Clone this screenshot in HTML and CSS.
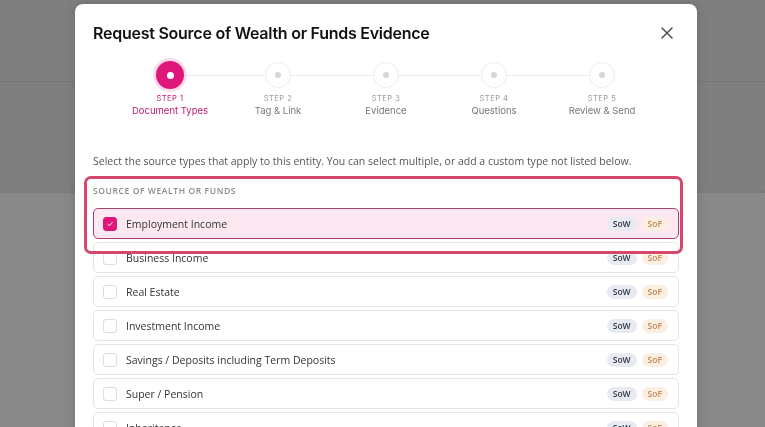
FILE: index.html
```html
<!DOCTYPE html>
<html lang="en">
<head>
    <meta charset="UTF-8" />
    <title>Request Source of Wealth or Funds Evidence</title>
    <meta name="viewport" content="width=device-width, initial-scale=1.0" />
    <link rel="stylesheet" href="styles.css">
</head>

<body>

    <!-- page behind the dialog -->
    <div class="page">
        <div class="page-header"></div>
        <div class="page-band"></div>
    </div>

    <!-- dialog -->
    <div class="overlay">
        <div class="modal">
            <div class="modal-head">
                <h2>Request Source of Wealth or Funds Evidence</h2>
                <button class="close" aria-label="Close">
                    <svg width="12" height="12" viewBox="0 0 12 12">
                        <path d="M1 1 L11 11 M11 1 L1 11" stroke="#555" stroke-width="1.6" stroke-linecap="round" />
                    </svg>
                </button>
            </div>

            <div class="stepper">
                <div class="step active">
                    <div class="dot"><span></span></div>
                    <div class="step-num">Step 1</div>
                    <div class="step-name">Document Types</div>
                </div>
                <div class="step">
                    <div class="dot"><span></span></div>
                    <div class="step-num">Step 2</div>
                    <div class="step-name">Tag &amp; Link</div>
                </div>
                <div class="step">
                    <div class="dot"><span></span></div>
                    <div class="step-num">Step 3</div>
                    <div class="step-name">Evidence</div>
                </div>
                <div class="step">
                    <div class="dot"><span></span></div>
                    <div class="step-num">Step 4</div>
                    <div class="step-name">Questions</div>
                </div>
                <div class="step">
                    <div class="dot"><span></span></div>
                    <div class="step-num">Step 5</div>
                    <div class="step-name">Review &amp; Send</div>
                </div>
            </div>

            <p class="intro">Select the source types that apply to this entity. You can select multiple, or add a custom type not listed below.</p>

            <div class="section">
                <div class="highlight"></div>
                <div class="section-title">Source of Wealth or Funds</div>

                <div class="types">
                    <div class="type checked">
                        <span class="box">
                            <svg width="8" height="8" viewBox="0 0 8 8"><path d="M1.8 4.2 L3.3 5.6 L6.2 2.5" fill="none" stroke="#fff" stroke-width="1" stroke-linecap="round" stroke-linejoin="round" /></svg>
                        </span>
                        <span class="type-name">Employment Income</span>
                        <span class="tag sow">SoW</span>
                        <span class="tag sof">SoF</span>
                    </div>
                    <div class="type">
                        <span class="box"></span>
                        <span class="type-name">Business Income</span>
                        <span class="tag sow">SoW</span>
                        <span class="tag sof">SoF</span>
                    </div>
                    <div class="type">
                        <span class="box"></span>
                        <span class="type-name">Real Estate</span>
                        <span class="tag sow">SoW</span>
                        <span class="tag sof">SoF</span>
                    </div>
                    <div class="type">
                        <span class="box"></span>
                        <span class="type-name">Investment Income</span>
                        <span class="tag sow">SoW</span>
                        <span class="tag sof">SoF</span>
                    </div>
                    <div class="type">
                        <span class="box"></span>
                        <span class="type-name">Savings / Deposits including Term Deposits</span>
                        <span class="tag sow">SoW</span>
                        <span class="tag sof">SoF</span>
                    </div>
                    <div class="type">
                        <span class="box"></span>
                        <span class="type-name">Super / Pension</span>
                        <span class="tag sow">SoW</span>
                        <span class="tag sof">SoF</span>
                    </div>
                    <div class="type">
                        <span class="box"></span>
                        <span class="type-name">Inheritance</span>
                        <span class="tag sow">SoW</span>
                        <span class="tag sof">SoF</span>
                    </div>
                </div>
            </div>
        </div>
    </div>

</body>
</html>
```

FILE: styles.css
```css
/* --- Page behind the dialog (already dimmed) --- */
body {
    margin: 0;
    padding: 0;
    background: #898989;
    font-family: "Open Sans", Arial, sans-serif;
    overflow: hidden;
}

.page-header {
    height: 81px;
    background: #7f7f7f;
    border-bottom: 1px solid #767676;
}

.page-band {
    height: 109px;
    background: #7f7f7f;
    border-bottom: 2px dashed #7a7a7a;
}

/* --- Dialog --- */
.overlay {
    position: fixed;
    top: 0;
    left: 0;
    width: 100%;
    height: 100%;
    padding: 4px 0 0 75px;
    box-sizing: border-box;
}

.modal {
    width: 622px;
    height: 460px;
    background: white;
    border-radius: 8px;
    padding: 17px 18px 0 18px;
    box-sizing: border-box;
    box-shadow: 0 0 12px rgba(0,0,0,0.15);
}

.modal-head {
    display: flex;
    align-items: center;
    justify-content: space-between;
    height: 24px;
}

.modal-head h2 {
    margin: 0;
    font-family: Inter, "Open Sans", sans-serif;
    font-size: 16px;
    font-weight: 600;
    line-height: 24px;
    color: #111;
    letter-spacing: -0.25px;
}

.close {
    border: none;
    background: none;
    padding: 0;
    margin-right: 6px;
    width: 12px;
    height: 12px;
    display: flex;
    cursor: pointer;
}

/* --- Stepper --- */
.stepper {
    display: grid;
    grid-template-columns: repeat(5, 108px);
    justify-content: center;
    margin-top: 16px;
}

.step {
    position: relative;
    display: flex;
    flex-direction: column;
    align-items: center;
}

.step + .step::before {
    content: "";
    position: absolute;
    top: 14px;
    left: -54px;
    width: 108px;
    height: 1px;
    background: #ececec;
}

.dot {
    position: relative;
    z-index: 1;
    width: 26px;
    height: 26px;
    margin: 1px 0;
    border: 1px solid #ededed;
    border-radius: 50%;
    background: white;
    box-sizing: border-box;
    display: flex;
    align-items: center;
    justify-content: center;
}

.dot span {
    width: 6px;
    height: 6px;
    border-radius: 50%;
    background: #d6d6d6;
}

.step.active .dot {
    width: 28px;
    height: 28px;
    margin: 0;
    border: none;
    background: #e0177a;
    box-shadow: 0 0 0 3px rgba(224, 23, 122, 0.15);
}

.step.active .dot span {
    width: 7px;
    height: 7px;
    background: white;
}

.step-num {
    margin-top: 5px;
    font-family: Inter, "Open Sans", sans-serif;
    font-size: 7.5px;
    line-height: 10px;
    letter-spacing: 0.5px;
    text-transform: uppercase;
    color: #9a9a9a;
}

.step-name {
    font-family: Inter, "Open Sans", sans-serif;
    font-size: 9.5px;
    line-height: 13px;
    color: #777;
}

.step.active .step-num,
.step.active .step-name {
    color: #c0186e;
}

/* --- Intro --- */
.intro {
    margin: 36px 0 0 0;
    font-size: 10.5px;
    line-height: 16px;
    color: #555;
}

/* --- Source types --- */
.section {
    position: relative;
    margin-top: 16px;
}

.highlight {
    position: absolute;
    top: -9px;
    left: -9px;
    width: 599px;
    height: 78px;
    border: 3px solid #d5476b;
    border-radius: 7px;
    box-sizing: border-box;
    z-index: 2;
    pointer-events: none;
}

.section-title {
    font-size: 8.5px;
    line-height: 12px;
    font-weight: 600;
    letter-spacing: 0.6px;
    text-transform: uppercase;
    color: #8a8a8a;
}

.types {
    display: flex;
    flex-direction: column;
    gap: 3px;
    margin-top: 11px;
}

.type {
    display: flex;
    align-items: center;
    height: 31px;
    padding: 0 9px;
    border: 1px solid #e4e4e4;
    border-radius: 5px;
    box-sizing: border-box;
    background: white;
}

.type.checked {
    background: #fde8f1;
    border-color: #a8436f;
}

.box {
    width: 14px;
    height: 14px;
    border: 1px solid #dcdcdc;
    border-radius: 3px;
    box-sizing: border-box;
    display: flex;
    align-items: center;
    justify-content: center;
}

.type.checked .box {
    background: #e0177a;
    border-color: #e0177a;
}

.type-name {
    flex: 1;
    margin-left: 9px;
    font-size: 10.5px;
    color: #333;
}

.tag {
    height: 14px;
    line-height: 14px;
    padding: 0 6px;
    border-radius: 7px;
    font-size: 8.5px;
    font-weight: 600;
}

.tag.sow {
    background: #e7eaf0;
    color: #2f3a4a;
}

.tag.sof {
    margin-left: 5px;
    margin-right: 1px;
    background: #fbefe2;
    color: #c2885a;
}
```
